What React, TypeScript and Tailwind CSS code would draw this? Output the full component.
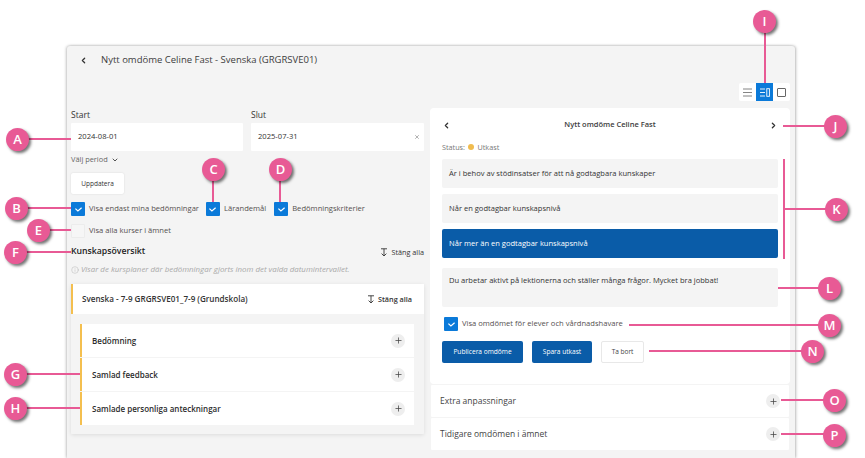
import { ChevronDown, ChevronLeft, ChevronRight, Info, Plus, X } from "lucide-react";

const callouts = [
  { label: "A", circle: "left-[6px] top-[128px]", line: "left-[26px] top-[138px] w-[45px] h-[2px]" },
  { label: "B", circle: "left-[5px] top-[197px]", line: "left-[25px] top-[207px] w-[46px] h-[2px]" },
  { label: "C", circle: "left-[202px] top-[158px]", line: "left-[212px] top-[178px] w-[2px] h-[24px]" },
  { label: "D", circle: "left-[269px] top-[158px]", line: "left-[279px] top-[178px] w-[2px] h-[24px]" },
  { label: "E", circle: "left-[27px] top-[219px]", line: "left-[47px] top-[229px] w-[24px] h-[2px]" },
  { label: "F", circle: "left-[4px] top-[241px]", line: "left-[24px] top-[251px] w-[47px] h-[2px]" },
  { label: "G", circle: "left-[4px] top-[363px]", line: "left-[24px] top-[373px] w-[56px] h-[2px]" },
  { label: "H", circle: "left-[4px] top-[397px]", line: "left-[24px] top-[407px] w-[56px] h-[2px]" },
  { label: "I", circle: "left-[753px] top-[10px]", line: "left-[764px] top-[30px] w-[2px] h-[53px]" },
  { label: "J", circle: "left-[824px] top-[115px]", line: "left-[783px] top-[125px] w-[43px] h-[2px]" },
  { label: "K", circle: "left-[825px] top-[198px]", line: "left-[783px] top-[208px] w-[44px] h-[2px]" },
  { label: "L", circle: "left-[818px] top-[277px]", line: "left-[778px] top-[287px] w-[42px] h-[2px]" },
  { label: "M", circle: "left-[818px] top-[314px]", line: "left-[629px] top-[324px] w-[191px] h-[2px]" },
  { label: "N", circle: "left-[801px] top-[340px]", line: "left-[649px] top-[350px] w-[154px] h-[2px]" },
  { label: "O", circle: "left-[823px] top-[389px]", line: "left-[781px] top-[399px] w-[44px] h-[2px]" },
  { label: "P", circle: "left-[823px] top-[424px]", line: "left-[781px] top-[433px] w-[44px] h-[2px]" },
];

const CheckBox = ({ on }: { on: boolean }) => (
  <span
    className={`flex h-[14px] w-[14px] shrink-0 items-center justify-center rounded-[1px] ${
      on ? "bg-[#0b7ad9]" : "border border-[#ececec] bg-[#f6f6f6]"
    }`}
  >
    {on && (
      <svg width="9" height="7" viewBox="0 0 9 7" fill="none" stroke="white" strokeWidth="1.2">
        <path d="M1.4 2.6 3.9 5 7.6 1.8" />
      </svg>
    )}
  </span>
);

const CheckRow = ({ on, text }: { on: boolean; text: string }) => (
  <label className="flex items-center gap-[4px] text-[7.6px] text-[#55504f]">
    <CheckBox on={on} />
    {text}
  </label>
);

const PlusButton = () => (
  <span className="flex h-[14px] w-[14px] items-center justify-center rounded-full bg-[#eeeeee]">
    <Plus size={9} strokeWidth={2} className="text-[#444444]" />
  </span>
);

const CloseAll = () => (
  <span className="flex items-center gap-[3px] text-[7.25px] text-[#333333]">
    <svg width="8" height="9" viewBox="0 0 8 9" fill="none" stroke="currentColor" strokeWidth="0.9">
      <path d="M1 .8h6M4 .8v7M1.6 5.6 4 8l2.4-2.4" />
    </svg>
    Stäng alla
  </span>
);

const Row = ({ text }: { text: string }) => (
  <div className="flex h-[33px] items-center justify-between border-l-2 border-[#f4bf4f] bg-white pl-[10px] pr-[9px] text-[8px] font-semibold text-[#2c2c2c]">
    {text}
    <PlusButton />
  </div>
);

const DateField = ({ label, value, clear }: { label: string; value: string; clear?: boolean }) => (
  <div className="flex flex-col">
    <span className="flex h-[15px] items-center text-[8.5px] font-medium text-[#333333]">{label}</span>
    <div className="flex h-[28px] items-center justify-between rounded-[1px] bg-white pl-[7px] pr-[4px] text-[7.6px] text-[#333333]">
      {value}
      {clear && <X size={6} strokeWidth={2} className="text-[#666666]" />}
    </div>
  </div>
);

const Grade = ({ text, active }: { text: string; active?: boolean }) => (
  <div
    className={`flex h-[29px] items-center rounded-[2px] pl-[7px] text-[7.55px] ${
      active ? "bg-[#0a5ca8] text-white" : "bg-[#f4f4f4] text-[#333333]"
    }`}
  >
    {text}
  </div>
);

const App = () => {
  return (
    <div className="relative h-[458px] w-[865px] overflow-hidden bg-white font-['Open_Sans',sans-serif]">
      <div className="ml-[67px] mt-[46px] h-[412px] w-[728px] rounded-t-[3px] bg-[#f4f4f4] px-[4px] shadow-[1px_0_3px_rgba(0,0,0,0.25),-1px_0_3px_rgba(0,0,0,0.2)]">
        <div className="flex h-[28px] items-center pl-[8px] pt-[1px] text-[9.5px] text-[#3d3d3d]">
          <ChevronLeft size={9} strokeWidth={3.5} className="text-[#333333]" />
          <span className="ml-[13px]">Nytt omdöme Celine Fast - Svenska (GRGRSVE01)</span>
        </div>

        <div className="mr-[1px] mt-[9px] flex h-[25px] justify-end">
          <div className="flex h-[18px] rounded-[2px] bg-white">
            <span className="flex w-[17px] items-center justify-center text-[#777777]">
              <svg width="9" height="9" viewBox="0 0 9 9" stroke="currentColor" strokeWidth="0.9">
                <path d="M0 1h9M0 4.5h9M0 8h9" />
              </svg>
            </span>
            <span className="flex w-[17px] items-center justify-center bg-[#0b7ad9] text-white">
              <svg width="10" height="9" viewBox="0 0 10 9" fill="none" stroke="currentColor" strokeWidth="0.9">
                <path d="M0 1h5M0 4.5h5M0 8h5" />
                <rect x="6.8" y=".7" width="2.6" height="7.6" />
              </svg>
            </span>
            <span className="flex w-[17px] items-center justify-center text-[#666666]">
              <svg width="9" height="9" viewBox="0 0 9 9" fill="none" stroke="currentColor" strokeWidth="1">
                <rect x=".5" y=".5" width="8" height="8" rx="0.5" />
              </svg>
            </span>
          </div>
        </div>

        <div className="flex gap-[6px]">
          {/* left column */}
          <div className="w-[353px]">
            <div className="grid grid-cols-[172px_173px] gap-[8px]">
              <DateField label="Start" value="2024-08-01" />
              <DateField label="Slut" value="2025-07-31" clear />
            </div>
            <div className="mt-[2px] flex h-[14px] items-center gap-[3px] text-[7.4px] text-[#666666]">
              Välj period
              <ChevronDown size={8} strokeWidth={2.5} className="text-[#333333]" />
            </div>
            <button className="mt-[6px] block h-[21px] w-[53px] rounded-[2px] bg-white text-[6.5px] text-[#333333] shadow-[0_0_2px_rgba(0,0,0,0.12)]">
              Uppdatera
            </button>
            <div className="mt-[8px] flex items-center">
              <CheckRow on text="Visa endast mina bedömningar" />
              <span className="ml-[7px]">
                <CheckRow on text="Lärandemål" />
              </span>
              <span className="ml-[8px]">
                <CheckRow on text="Bedömningskriterier" />
              </span>
            </div>
            <div className="mt-[8px]">
              <CheckRow on={false} text="Visa alla kurser i ämnet" />
            </div>
            <div className="mt-[6px] flex h-[16px] items-center justify-between">
              <span className="text-[8.7px] font-semibold text-[#222222]">Kunskapsöversikt</span>
              <CloseAll />
            </div>
            <div className="mt-[2px] flex h-[16px] items-center gap-[2px] text-[7.9px] italic text-[#a9a9a9]">
              <Info size={8} strokeWidth={1.2} />
              Visar de kursplaner där bedömningar gjorts inom det valda datumintervallet.
            </div>
            <div className="mt-[6px] rounded-[1px] shadow-[0_1px_4px_rgba(0,0,0,0.1)]">
              <div className="flex h-[30px] items-center justify-between border-l-2 border-[#f4bf4f] bg-white pl-[9px] pr-[12px] text-[8.1px] font-semibold text-[#333333]">
                Svenska - 7-9 GRGRSVE01_7-9 (Grundskola)
                <CloseAll />
              </div>
              <div className="flex flex-col gap-px pb-[9px] pl-[9px] pr-[10px] pt-[10px]">
                <Row text="Bedömning" />
                <Row text="Samlad feedback" />
                <Row text="Samlade personliga anteckningar" />
              </div>
            </div>
          </div>

          {/* right column */}
          <div className="w-[360px]">
            <div className="rounded-[4px] bg-white px-[12px] pb-[21px]">
              <div className="flex h-[34px] items-center justify-between text-[7.5px] font-semibold text-[#3d3d3d]">
                <ChevronLeft size={9} strokeWidth={3.5} className="text-[#333333]" />
                Nytt omdöme Celine Fast
                <ChevronRight size={9} strokeWidth={3.5} className="text-[#333333]" />
              </div>
              <div className="flex h-[10px] items-center gap-[3px] text-[7.25px] text-[#777777]">
                Status:
                <span className="h-[6.5px] w-[6.5px] rounded-full bg-[#f0bc4f]" />
                Utkast
              </div>
              <div className="mt-[7px] flex flex-col gap-[6px]">
                <Grade text="Är i behov av stödinsatser för att nå godtagbara kunskaper" />
                <Grade text="Når en godtagbar kunskapsnivå" />
                <Grade text="Når mer än en godtagbar kunskapsnivå" active />
              </div>
              <div className="mt-[10px] h-[39px] rounded-[2px] bg-[#f4f4f4] pl-[7px] pt-[7px] text-[7.55px] text-[#333333]">
                Du arbetar aktivt på lektionerna och ställer många frågor. Mycket bra jobbat!
              </div>
              <div className="ml-[2px] mt-[10px]">
                <CheckRow on text="Visa omdömet för elever och vårdnadshavare" />
              </div>
              <div className="mt-[10px] flex gap-[9px]">
                <button className="h-[22px] w-[81px] rounded-[2px] bg-[#0a5ca8] text-[6.6px] font-medium text-white">
                  Publicera omdöme
                </button>
                <button className="h-[22px] w-[60px] rounded-[2px] bg-[#0a5ca8] text-[6.6px] font-medium text-white">
                  Spara utkast
                </button>
                <button className="h-[22px] w-[43px] rounded-[2px] border border-[#e8e8e8] bg-white text-[6.5px] text-[#444444]">
                  Ta bort
                </button>
              </div>
            </div>
            <div className="mx-px mt-px flex flex-col gap-px">
              <div className="flex h-[32px] items-center justify-between rounded-[1px] bg-white pl-[9px] pr-[9px] text-[8.5px] text-[#444444]">
                Extra anpassningar
                <PlusButton />
              </div>
              <div className="flex h-[32px] items-center justify-between rounded-[1px] bg-white pl-[9px] pr-[9px] text-[8.5px] text-[#444444]">
                Tidigare omdömen i ämnet
                <PlusButton />
              </div>
            </div>
          </div>
        </div>
      </div>

      {/* annotation overlay */}
      <span className="absolute left-[783px] top-[159px] h-[100px] w-[2px] bg-[#e85a95]" />
      {callouts.map((c) => (
        <span key={c.label}>
          <span className={`absolute bg-[#e85a95] ${c.line}`} />
          <span
            className={`absolute flex h-[23px] w-[23px] items-center justify-center rounded-full bg-[#e85a95] text-[13px] font-semibold text-white shadow-[2px_2px_3px_rgba(0,0,0,0.55)] ${c.circle}`}
          >
            {c.label}
          </span>
        </span>
      ))}
    </div>
  );
};

export default App;
